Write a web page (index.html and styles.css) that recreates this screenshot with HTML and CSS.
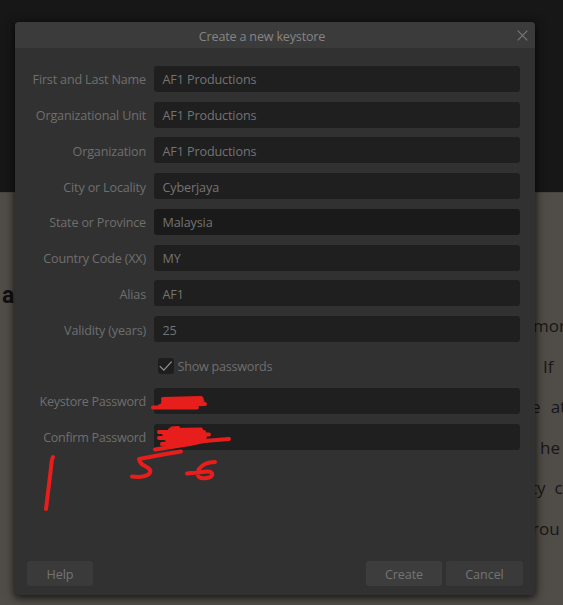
FILE: index.html
```html
<!DOCTYPE html>
<html lang="en">
<head>
<meta charset="utf-8">
<title>Create a new keystore</title>
<link rel="stylesheet" href="styles.css">
</head>
<body>
<div class="backdrop">
  <div class="band"></div>
  <div class="page">
    <b class="left-word">a</b>
    <div class="copy">
      <p class="l1">mor</p>
      <p class="l2">If</p>
      <p class="l3">e&nbsp; at</p>
      <p class="l4">he</p>
      <p class="l5">ty&nbsp; c</p>
      <p class="l6">rou</p>
    </div>
  </div>
</div>
<main class="dialog">
  <header class="title"><span>Create a new keystore</span>
    <svg class="close" width="11" height="11" viewBox="0 0 11 11"><path d="M.7.7l9.6 9.6M10.3.7L.7 10.3"/></svg>
  </header>
  <form class="form">
    <div class="row"><label>First and Last Name</label><div class="field">AF1 Productions</div></div>
    <div class="row"><label>Organizational Unit</label><div class="field">AF1 Productions</div></div>
    <div class="row"><label>Organization</label><div class="field">AF1 Productions</div></div>
    <div class="row"><label>City or Locality</label><div class="field">Cyberjaya</div></div>
    <div class="row"><label>State or Province</label><div class="field dark">Malaysia</div></div>
    <div class="row"><label>Country Code (XX)</label><div class="field">MY</div></div>
    <div class="row"><label>Alias</label><div class="field">AF1</div></div>
    <div class="row"><label>Validity (years)</label><div class="field">25</div></div>
    <div class="row"><span></span><div class="check"><i class="box"><svg width="16" height="16" viewBox="0 0 16 16"><path d="M1.8 8.200l4 4L13.600 3.600"/></svg></i><span>Show passwords</span></div></div>
    <div class="row"><label class="wide">Keystore Password</label><div class="field"></div></div>
    <div class="row"><label class="wide">Confirm Password</label><div class="field"></div></div>
  </form>
  <footer class="actions"><button class="help">Help</button><button class="create">Create</button><button class="cancel">Cancel</button></footer>
</main>
<svg class="marks" width="563" height="605" viewBox="0 0 563 605">
  <g class="hidden-text"><path d="M201 398h2M202 401h2M165 435h12"/></g>
  <path d="M163 399L201 398M163 402L202 400M162 405L205 404M153 407.5L197 407.5M160 406L195 404"/>
  <path d="M172 428.5L178 428M170 430L201 429.5M159 432L204 432M164 434L209 434.5M159 438L205 437M167 440L200 439M162 444L198 441M155 449.5L190 444L204 441L229 439M173 446L196 442"/>
  <path d="M181 451.5L163 454.5L139 459Q140 464 145 466Q153 470 149 474Q144 478 132 476.5"/>
  <path d="M215 462Q204 462 199 469C195 477 200 479 207 478C214 477 214 471 207 471.5L187 473.5"/>
  <path d="M53 457Q51.500 459 51 468L46 509"/>
</svg>
</body>
</html>
```

FILE: styles.css
```css
* { box-sizing: border-box; }
body { margin: 0; width: 563px; height: 605px; overflow: hidden; position: relative; font: 12.6px/18px "Open Sans", "Noto Sans", sans-serif; color: #6f6f6f; }
.backdrop { position: absolute; inset: 0; background: #504c47; }
.band { height: 192px; background: #171717; }
.page { display: flex; justify-content: space-between; height: 413px; border-top: 1px solid #494340; color: #171717; }
.left-word { margin: 91px 0 0 2px; font: bold 23px/24px Roboto, sans-serif; color: #111; }
.copy { width: 31px; padding-top: 113px; font-size: 17px; font-weight: 500; line-height: 40.6px; white-space: nowrap; }
.copy p { margin: 0; }
.copy .l1 { margin-left: 1px; }
.copy .l2 { margin-left: 11px; }
.copy .l3 { margin-left: -1px; word-spacing: .7px; }
.copy .l4 { margin-left: 8px; }
.copy .l5 { margin-left: -1px; }
.dialog { position: absolute; left: 15px; top: 22px; width: 520px; height: 573px; display: flex; flex-direction: column; background: #313131; border-radius: 4px; box-shadow: 0 2px 6px 1px rgba(0,0,0,.55), 0 2px 14px rgba(0,0,0,.25); }
.title { position: relative; height: 26px; flex: none; display: flex; align-items: center; justify-content: center; padding: 3px 26px 0 0; background: #3b3b3b; border-radius: 4px 4px 0 0; color: #858585; letter-spacing: -.19px; }
.close { position: absolute; right: 7.5px; top: 7.5px; fill: none; stroke: #777; stroke-width: 1.2; }
.form { padding: 17.77px 15px 0 0; }
.row { height: 35.79px; display: grid; grid-template-columns: 131px 366px; column-gap: 8px; align-items: start; }
.row label { padding-top: .4px; text-align: right; line-height: 27px; white-space: nowrap; letter-spacing: -.18px; }
.row .wide { letter-spacing: -.29px; }
.field { height: 26px; padding: .4px 0 0 8.5px; line-height: 27px; border-radius: 3px; background: #1f1f1f; color: #747474; letter-spacing: -.12px; }
.dark { background: #1a1a1a; }
.check { display: flex; align-items: center; gap: 3.5px; padding: 5px 0 0 4px; height: 22px; letter-spacing: -.24px; }
.box { width: 16px; height: 16px; border-radius: 3px; background: #1e1e1e; }
.box svg { display: block; fill: none; stroke: #949494; stroke-width: 1.2; }
.check span { padding-top: 2px; }
.actions { margin-top: auto; display: flex; gap: 4px; padding: 0 12px 9px; }
button { height: 25px; border: 0; border-radius: 3px; padding: 2px 0 0; background: #3a3a3a; color: #747474; font: inherit; letter-spacing: -.08px; }
.help { width: 66px; margin-right: auto; }
.create { width: 76px; background: #3d3d3d; }
.cancel { width: 77px; }
.marks { position: absolute; inset: 0; fill: none; stroke: #e81e1c; stroke-width: 4; stroke-linecap: round; stroke-linejoin: round; }
.hidden-text { stroke: #777; stroke-width: 1; }
```
